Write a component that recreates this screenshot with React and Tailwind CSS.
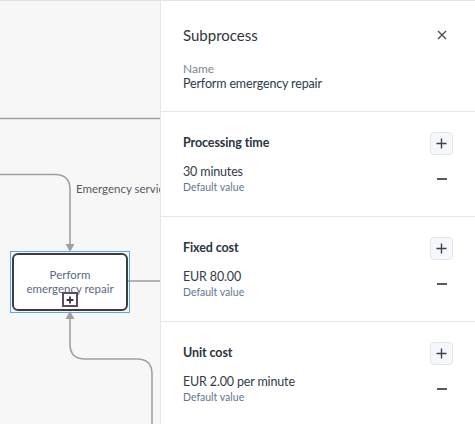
import React from "react";

function Section({ title, value }) {
  return (
    <div className="shrink-0 border-t border-[#e3e6eb] pl-[22px] pr-[22px] pt-[20px] pb-[22px] h-[105px]">
      <div className="flex items-center justify-between h-[23px]">
        <span className="text-[12.5px] font-bold tracking-[-0.1px] text-[#2a3340]">{title}</span>
        <button className="w-[23px] h-[23px] flex items-center justify-center rounded-[4px] border border-[#e1e5ec] bg-[#f5f7fb]">
          <svg width="11" height="11" viewBox="0 0 11 11"><path d="M5.5 0.5v10M0.5 5.5h10" stroke="#3a4350" strokeWidth="1.4" /></svg>
        </button>
      </div>
      <div className="flex items-center justify-between mt-[9px]">
        <div className="flex flex-col">
          <span className="text-[12.5px] leading-[16px] tracking-[-0.15px] text-[#333b47]">{value}</span>
          <span className="text-[10.5px] leading-[14px] text-[#5f7592]">Default value</span>
        </div>
        <div className="w-[23px] flex justify-center">
          <div className="w-[10px] h-[1.6px] bg-[#555b63]" />
        </div>
      </div>
    </div>
  );
}

export default function App() {
  return (
    <div className="w-[475px] h-[424px] flex overflow-hidden border-t border-[#dfe2e7]" style={{ fontFamily: "Lato, sans-serif" }}>
      <div className="relative w-[160px] h-full bg-[#f8f7f8] shrink-0 overflow-hidden">
        <svg className="absolute inset-0" width="160" height="424" viewBox="0 0 160 424">
          <g fill="none" stroke="#a0a0a2" strokeWidth="1.6">
            <path d="M0 117.5H160" />
            <path d="M0 173.5H55 Q70 173.5 70 188.5V245" />
            <path d="M128 280H160" />
            <path d="M70 316V343 Q70 358 85 358H137 Q152 358 152 373V424" />
          </g>
          <path d="M65.5 243L70 251L74.5 243Z" fill="#a0a0a2" />
          <path d="M65.5 318L70 310L74.5 318Z" fill="#a0a0a2" />
        </svg>
        <span className="absolute left-[76px] top-[179px] text-[11.5px] text-[#555a63] whitespace-nowrap">Emergency service</span>
        <div className="absolute left-[10px] top-[250px] w-[120px] h-[62px] border border-[#5aa6ea]" />
        <div className="absolute left-[12px] top-[252px] w-[116px] h-[58px] rounded-[6px] border-2 border-[#3d3c45] bg-white flex flex-col items-center pt-[13px]">
          <span className="text-[11.5px] leading-[14px] text-[#5a6a82]">Perform</span>
          <span className="text-[11.5px] leading-[14px] text-[#5a6a82] whitespace-nowrap">emergency repair</span>
        </div>
        <div className="absolute left-[62px] top-[291px] w-[16px] h-[15px] border-2 border-[#5b4d5c] bg-white flex items-center justify-center">
          <svg width="8" height="8" viewBox="0 0 8 8"><path d="M4 0.5v7M0.5 4h7" stroke="#3d3240" strokeWidth="1.8" /></svg>
        </div>
      </div>
      <div className="flex-1 bg-white border-l border-[#e2e6ee] flex flex-col overflow-hidden">
        <div className="shrink-0 h-[110px] pl-[22px] pr-[22px] pt-[24px]">
          <div className="flex items-center justify-between h-[20px]">
            <span className="text-[15px] text-[#2f3640]">Subprocess</span>
            <div className="w-[23px] flex justify-center">
              <svg width="10" height="10" viewBox="0 0 10 10"><path d="M1 1L9 9M9 1L1 9" stroke="#4a4f57" strokeWidth="1.4" /></svg>
            </div>
          </div>
          <div className="mt-[17px] text-[12px] leading-[14px] text-[#7b8896]">Name</div>
          <div className="text-[12.5px] leading-[15px] tracking-[-0.15px] text-[#2d3b4d]">Perform emergency repair</div>
        </div>
        <Section title="Processing time" value="30 minutes" />
        <Section title="Fixed cost" value="EUR 80.00" />
        <Section title="Unit cost" value="EUR 2.00 per minute" />
      </div>
    </div>
  );
}
